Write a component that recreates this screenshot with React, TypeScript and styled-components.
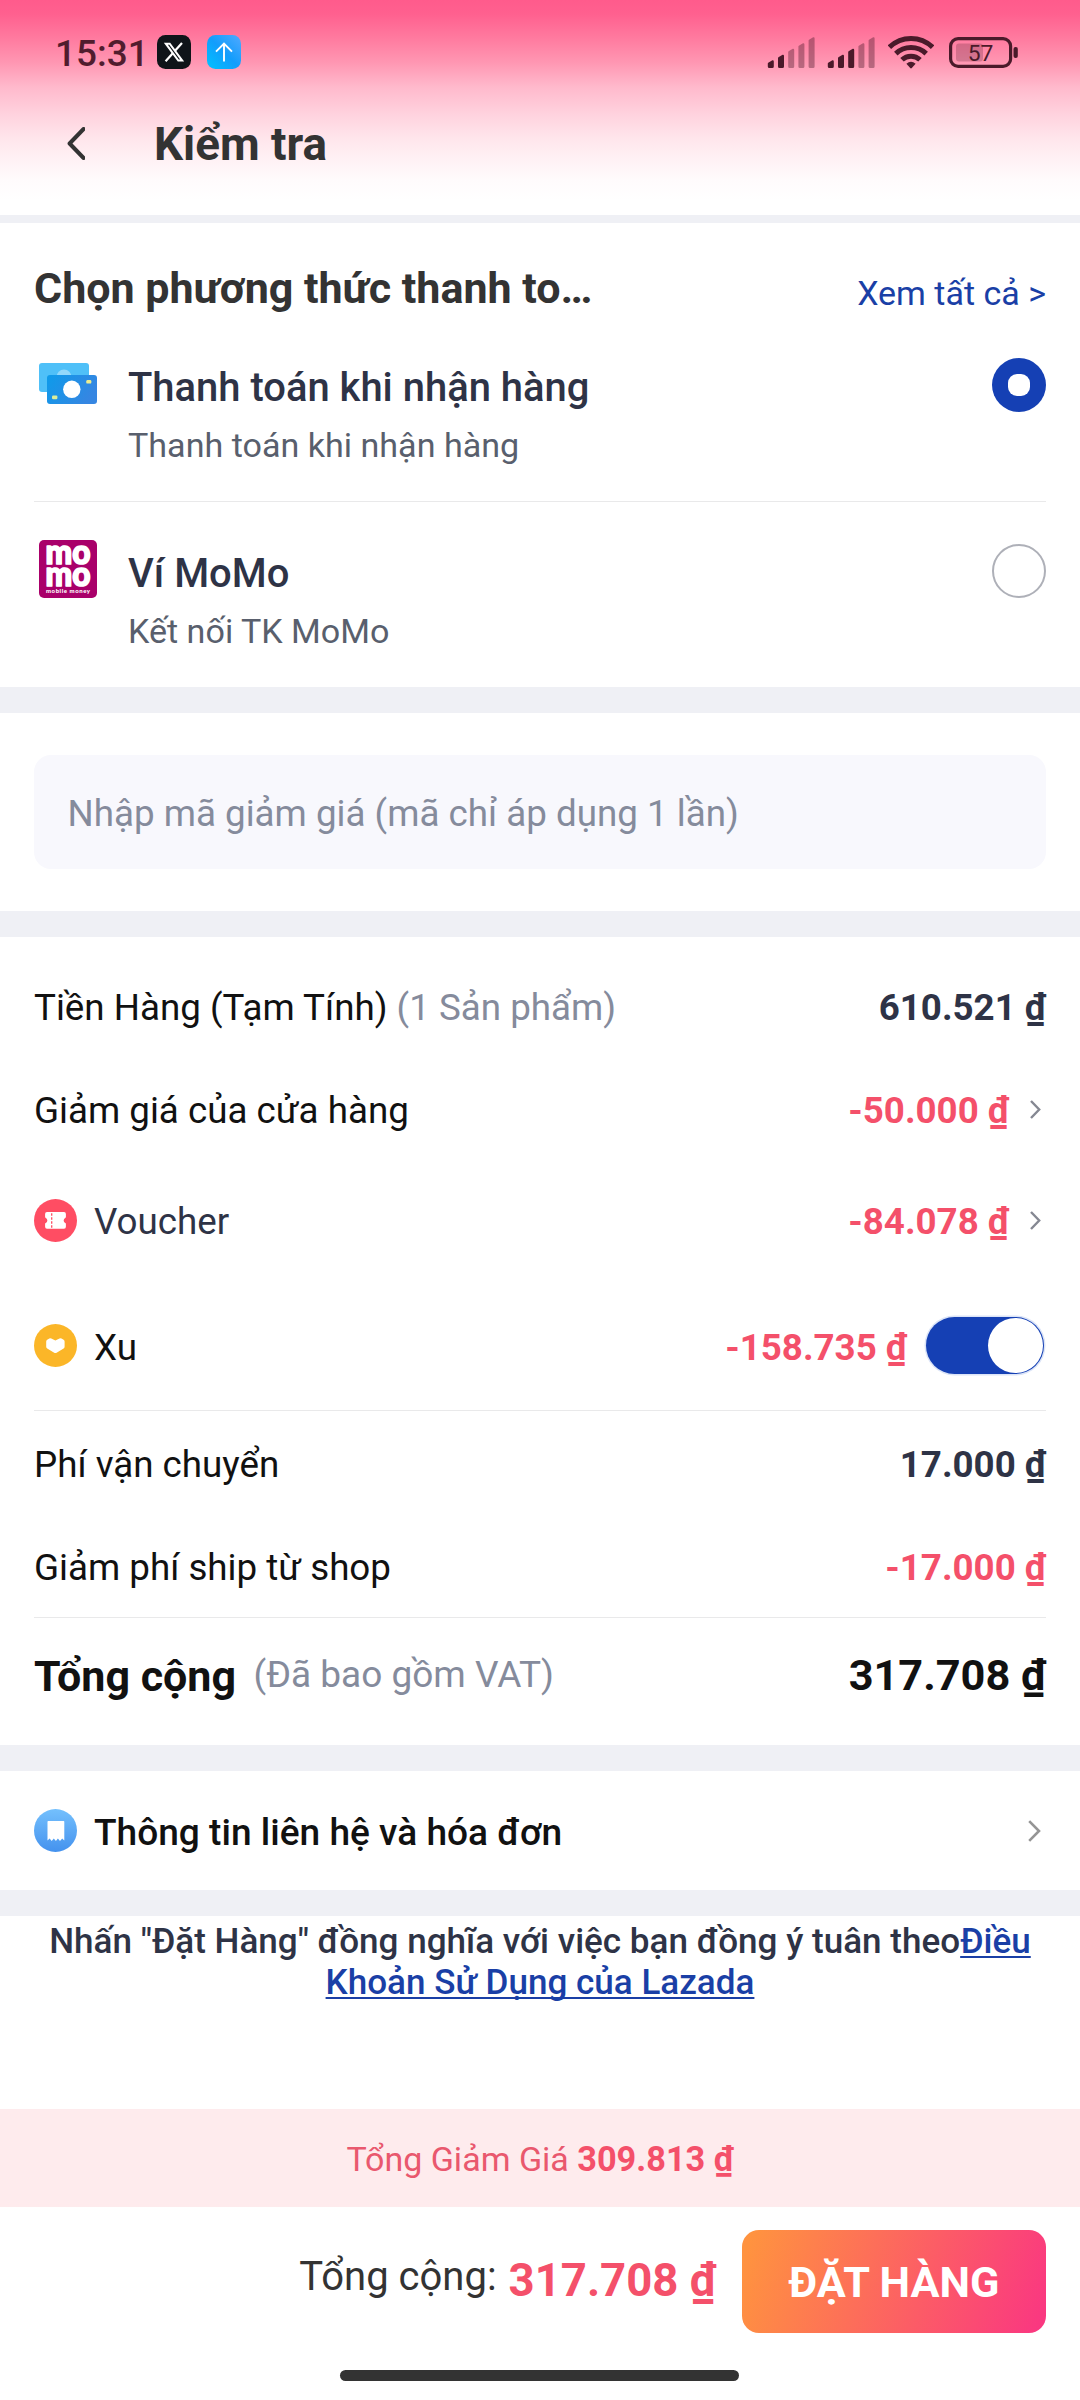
import React, { useState } from "react";
import styled, { createGlobalStyle } from "styled-components";

const color = {
  ink: "#111111",
  heading: "#333333",
  navy: "#2e3346",
  slate: "#595f6d",
  muted: "#858b9c",
  blue: "#1a3fa6",
  primary: "#1540b4",
  red: "#f4506a",
  band: "#eff0f5",
  line: "#e9e9ea",
  status: "#4a1a2a",
};

const GlobalStyle = createGlobalStyle`
  *, *::before, *::after { box-sizing: border-box; }
  body {
    margin: 0;
    background: #ffffff;
    font-family: Roboto, "Liberation Sans", sans-serif;
  }
  button { font-family: inherit; }
`;

const Screen = styled.div`
  display: flex;
  flex-direction: column;
  width: 1080px;
  height: 2400px;
  background: #ffffff;
  overflow: hidden;
`;

/* Header */

const Header = styled.header`
  height: 215px;
  flex: none;
  background: linear-gradient(
    180deg,
    #ff5b8c 0,
    #ff608f 14px,
    #ff7a9f 38px,
    #ff96b2 62px,
    #ffb9cc 87px,
    #ffd2de 114px,
    #ffe6ec 139px,
    #fff3f6 163px,
    #fffbfc 180px,
    #ffffff 200px
  );
`;

const StatusBar = styled.div`
  display: flex;
  align-items: center;
  height: 104px;
  padding: 0 62px 0 55px;
`;

const Clock = styled.span`
  width: 95px;
  margin-right: 7px;
  padding-top: 3px;
  font-size: 36.9px;
  font-weight: 500;
  line-height: 44px;
  color: #511c2e;
`;

const AppBadge = styled.svg`
  display: block;
  width: 34px;
  height: 34px;
  margin-right: 16px;
`;

const StatusIcons = styled.div`
  display: flex;
  align-items: center;
  margin-left: auto;
`;

const SignalSvg = styled.svg`
  display: block;
  margin-right: 12px;
`;

const WifiSvg = styled.svg`
  display: block;
  margin: 0 15px 0 1px;
`;

const BatterySvg = styled.svg`
  display: block;
`;

const TitleBar = styled.div`
  display: flex;
  align-items: center;
  height: 80px;
  padding-left: 67px;
`;

const BackButton = styled.button`
  width: 18px;
  height: 33px;
  margin: 0 69px 2px 0;
  padding: 0;
  border: 0;
  background: none;
  svg { display: block; }
`;

const PageTitle = styled.h1`
  margin: 2px 0 0;
  font-size: 45.8px;
  line-height: 80px;
  font-weight: 700;
  color: ${color.heading};
`;

/* Shared */

const Band = styled.div<{ $thin?: boolean }>`
  flex: none;
  height: ${(p) => (p.$thin ? 8 : 26)}px;
  background: ${color.band};
`;

const Rule = styled.hr`
  height: 1px;
  margin: 0;
  border: 0;
  background: ${color.line};
`;

/* Payment methods */

const Payment = styled.section`
  height: 464px;
  padding: 0 34px;
  flex: none;
`;

const SectionHead = styled.div`
  display: flex;
  justify-content: space-between;
  align-items: center;
  height: 130px;
`;

const SectionTitle = styled.h2`
  margin: 0;
  font-size: 43px;
  font-weight: 700;
  color: ${color.heading};
`;

const SeeAll = styled.a`
  padding-top: 10px;
  font-size: 34px;
  color: ${color.blue};
`;

const Method = styled.div<{ $first?: boolean }>`
  display: flex;
  align-items: flex-start;
  height: ${(p) => (p.$first ? 148 : 185)}px;
  padding: ${(p) => (p.$first ? 1 : 38)}px 0 0 5px;
`;

const MethodIcon = styled.svg`
  display: block;
  width: 58px;
  height: 58px;
  flex: none;
  overflow: visible;
`;

const MethodText = styled.div`
  flex: 1;
  margin-left: 31px;
  padding-top: 5px;
`;

const MethodTitle = styled.div`
  font-size: 39.95px;
  line-height: 58px;
  font-weight: 500;
  color: ${color.navy};
`;

const MethodNote = styled.div`
  font-size: 34.1px;
  line-height: 56px;
  color: ${color.slate};
`;

const Radio = styled.button<{ $on: boolean }>`
  display: grid;
  place-items: center;
  width: 54px;
  height: 54px;
  margin-top: 4px;
  padding: 0;
  border-radius: 50%;
  border: ${(p) => (p.$on ? "0" : "2px solid #aeb0b8")};
  background: ${(p) => (p.$on ? color.primary : "#ffffff")};
  &::after {
    content: "";
    width: 22px;
    height: 22px;
    border-radius: 9px;
    background: #ffffff;
  }
`;

/* Coupon */

const Coupon = styled.section`
  flex: none;
  height: 198px;
  padding: 42px 34px;
`;

const CouponInput = styled.input`
  display: block;
  width: 100%;
  height: 114px;
  padding: 3px 34px 0 33.5px;
  border: 0;
  border-radius: 17px;
  background: #f8f8fd;
  font: 400 36.75px Roboto, "Liberation Sans", sans-serif;
  color: ${color.navy};
  outline: none;
  &::placeholder {
    color: ${color.muted};
    opacity: 1;
  }
`;

/* Summary */

const Summary = styled.section`
  flex: none;
  height: 808px;
  padding: 18px 34px 0;
`;

const Row = styled.div<{ $h: number }>`
  display: flex;
  align-items: center;
  height: ${(p) => p.$h}px;
`;

const CoinRow = styled(Row)`
  padding-top: 2px;
`;

const RoundIcon = styled.svg`
  display: block;
  width: 43px;
  height: 43px;
  margin-right: 17px;
  flex: none;
`;

const Label = styled.span<{ $tone?: string; $weight?: number }>`
  padding-top: 3px;
  font-size: ${(p) => (p.$weight ? 37.1 : 36.75)}px;
  font-weight: ${(p) => p.$weight ?? 400};
  line-height: 44px;
  white-space: pre;
  color: ${(p) => p.$tone ?? color.ink};
`;

const Muted = styled.span`
  color: ${color.muted};
`;

const Price = styled.span<{ $tone?: string }>`
  margin-left: auto;
  padding-top: 3px;
  font-size: 36.7px;
  font-weight: 700;
  line-height: 44px;
  color: ${(p) => p.$tone ?? color.navy};
`;

const IconLabel = styled(Label)`
  padding-top: 4px;
`;

const IconPrice = styled(Price)`
  padding-top: 4px;
`;

const TotalLabel = styled.span`
  margin-right: 17.5px;
  padding-top: 2px;
  font-size: 43px;
  font-weight: 700;
  color: ${color.ink};
`;

const VatNote = styled.span`
  font-size: 37px;
  color: ${color.muted};
`;

const TotalPrice = styled.span`
  margin-left: auto;
  padding-top: 2px;
  font-size: 43.3px;
  font-weight: 700;
  color: ${color.ink};
`;

const ChevronSvg = styled.svg`
  display: block;
  margin: 0 5px 0 21px;
  flex: none;
`;

const EndChevronSvg = styled(ChevronSvg)`
  margin-left: auto;
`;

const Toggle = styled.button<{ $on: boolean }>`
  display: flex;
  align-items: center;
  justify-content: ${(p) => (p.$on ? "flex-end" : "flex-start")};
  width: 118px;
  height: 57px;
  margin: 0 2px 0 19px;
  padding: 0 1px;
  border: 0;
  border-radius: 29px;
  background: ${(p) => (p.$on ? color.primary : "#c9ccd6")};
  box-shadow: 0 0 0 1.5px #dbe4f7;
  &::after {
    content: "";
    width: 55px;
    height: 55px;
    border-radius: 50%;
    background: #ffffff;
  }
`;

/* Contact and terms */

const Contact = styled.section`
  flex: none;
  padding: 0 34px;
`;

const Terms = styled.p`
  flex: 1;
  margin: 0;
  padding-top: 5px;
  font-size: 35.05px;
  font-weight: 500;
  line-height: 41px;
  text-align: center;
  color: ${color.navy};
`;

const TermsLink = styled.a`
  color: ${color.blue};
  text-decoration: underline;
  text-decoration-thickness: 2px;
  text-decoration-skip-ink: none;
  text-underline-offset: 3px;
`;

/* Footer */

const Savings = styled.div`
  flex: none;
  height: 98px;
  padding-top: 1px;
  font-size: 34px;
  line-height: 98px;
  text-align: center;
  background: #feebed;
  color: #e9586e;
`;

const SavingsValue = styled.strong`
  font-size: 34.3px;
  font-weight: 700;
  color: ${color.red};
`;

const Checkout = styled.footer`
  display: flex;
  flex-direction: column;
  align-items: center;
  flex: none;
  height: 193px;
  padding-top: 23px;
`;

const CheckoutBar = styled.div`
  display: flex;
  align-items: center;
  align-self: stretch;
  justify-content: flex-end;
  height: 103px;
  padding-right: 34px;
`;

const PayLabel = styled.span`
  margin-right: 12px;
  padding-bottom: 11px;
  font-size: 40px;
  color: ${color.heading};
`;

const PayTotal = styled.span`
  margin-right: 26px;
  padding-bottom: 2px;
  font-size: 45.5px;
  font-weight: 700;
  color: ${color.red};
`;

const OrderButton = styled.button`
  width: 304px;
  height: 103px;
  padding: 2px 0 0;
  border: 0;
  border-radius: 17px;
  background: linear-gradient(108deg, #ff933f 3%, #fa3880 97%);
  font-size: 43.2px;
  font-weight: 700;
  color: #ffffff;
`;

const HomeIndicator = styled.div`
  width: 399px;
  height: 11px;
  margin: 37px 1px 0 0;
  border-radius: 6px;
  background: #333333;
`;

/* Drawings */

function Signal({ level }: { level: number }) {
  const heights = [8, 13.5, 19.5, 25, 31];
  return (
    <SignalSvg width="48" height="31" viewBox="0 0 48 31">
      {heights.map((h, i) => {
        const x = 0.8 + i * 10.2;
        const top = 31 - h;
        return (
          <path
            key={h}
            d={`M${x} ${top + 3.6}Q${x} ${top + 2.8} ${x + 0.8} ${top + 2.4}L${x + 4.6} ${top + 0.3}Q${x + 6} ${top} ${x + 6} ${top + 1.5}V29.5Q${x + 6} 31 ${x + 4.5} 31H${x + 1.5}Q${x} 31 ${x} 29.5Z`}
            fill={color.status}
            opacity={i < level ? 1 : 0.4}
          />
        );
      })}
    </SignalSvg>
  );
}

function Wifi() {
  return (
    <WifiSvg width="46" height="34" viewBox="0 0 46 34" fill="none" stroke={color.status} strokeWidth="5">
      <path d="M1.4 12.2A31 31 0 0 1 44.6 12.2" />
      <path d="M7.8 18.6A22 22 0 0 1 38.2 18.6" />
      <path d="M14 24.8A13 13 0 0 1 32 24.8" />
      <path d="M18.4 28.8Q23 24.6 27.6 28.8L23.8 33Q23 33.8 22.2 33Z" fill={color.status} stroke="none" />
    </WifiSvg>
  );
}

function Battery() {
  return (
    <BatterySvg width="69" height="31" viewBox="0 0 69 31">
      <rect x="1.6" y="1.6" width="60" height="27.8" rx="7.5" fill="none" stroke={color.status} strokeWidth="3.2" />
      <rect x="7" y="6.5" width="27" height="18" rx="3" fill={color.status} opacity="0.24" />
      <rect x="64.5" y="10" width="4.3" height="11" rx="2" fill={color.status} />
      <text x="31.6" y="23.8" textAnchor="middle" fontFamily="Roboto, sans-serif" fontSize="22.8" fontWeight="400" fill={color.status}>
        57
      </text>
    </BatterySvg>
  );
}

function XBadge() {
  return (
    <AppBadge viewBox="0 0 34 34">
      <rect width="34" height="34" rx="8.5" fill="#0f1419" />
      <path d="M25 8L8.6 26.2" stroke="#ffffff" strokeWidth="2.2" />
      <path d="M8.8 8.7H12.7L25.2 25.6H21.3Z" fill="#0f1419" stroke="#ffffff" strokeWidth="2" />
    </AppBadge>
  );
}

function UploadBadge() {
  return (
    <AppBadge viewBox="0 0 34 34">
      <defs>
        <linearGradient id="upload" x1="0" y1="1" x2="1" y2="0">
          <stop offset="0" stopColor="#00c3ff" />
          <stop offset="0.5" stopColor="#129dfc" />
          <stop offset="1" stopColor="#52a9ff" />
        </linearGradient>
      </defs>
      <rect width="34" height="34" rx="8.5" fill="url(#upload)" />
      <path d="M17 26.5V8.6M9 16.6L17 8.6L25 16.6" fill="none" stroke="#ffffff" strokeWidth="1.9" />
    </AppBadge>
  );
}

function CashIcon() {
  return (
    <MethodIcon viewBox="0 0 58 58">
      <defs>
        <linearGradient id="cash" x1="0" y1="0" x2="1" y2="0.4">
          <stop offset="0" stopColor="#0d9bea" />
          <stop offset="1" stopColor="#3586e2" />
        </linearGradient>
      </defs>
      <rect x="0" y="9" width="50" height="29" rx="3" fill="#4fc0f8" />
      <circle cx="25" cy="23" r="7.5" fill="#93d8fb" />
      <rect x="8" y="21" width="50" height="29" rx="3" fill="url(#cash)" />
      <circle cx="32.8" cy="35.3" r="8.7" fill="#ffffff" />
      <rect x="47.3" y="26" width="5" height="3.6" rx="1.2" fill="#eeee8f" />
      <rect x="13" y="41.6" width="5.4" height="3.6" rx="1.2" fill="#dbee9a" />
    </MethodIcon>
  );
}

function MomoIcon() {
  return (
    <MethodIcon viewBox="0 0 58 58" fontFamily="Lato, Roboto, sans-serif" fontWeight="900" fill="#ffffff">
      <rect width="58" height="58" rx="5" fill="#a9006a" />
      <g stroke="#ffffff" strokeWidth="1.7" strokeLinejoin="round" fontSize="33.5">
        <text x="6.6" y="23.9" textLength="45" lengthAdjust="spacingAndGlyphs">mo</text>
        <text x="6.6" y="45.6" textLength="45" lengthAdjust="spacingAndGlyphs">mo</text>
      </g>
      <text x="7" y="52.8" fontSize="6" textLength="44">mobile money</text>
    </MethodIcon>
  );
}

function VoucherIcon() {
  return (
    <RoundIcon viewBox="0 0 43 43">
      <circle cx="21.5" cy="21.5" r="21.5" fill="#ff4d63" />
      <path
        d="M13 13H30Q31.9 13 31.9 15V18A1 1 0 0 1 31.2 18.9A2.8 2.8 0 0 0 31.2 23.9A1 1 0 0 1 31.9 24.8V27.8Q31.9 29.8 30 29.8H13Q11.1 29.8 11.1 27.8V24.8A1 1 0 0 1 11.8 23.9A2.8 2.8 0 0 0 11.8 18.9A1 1 0 0 1 11.1 18V15Q11.1 13 13 13Z"
        fill="#ffffff"
      />
      <path d="M17.7 14.3V29" stroke="#ff4d63" strokeWidth="1.3" strokeDasharray="2.4 1.6" />
    </RoundIcon>
  );
}

function CoinIcon() {
  return (
    <RoundIcon viewBox="0 0 43 43">
      <circle cx="21.5" cy="21.5" r="21.5" fill="#fbb628" />
      <path
        d="M21.4 16.4L25.5 14.6Q26.5 14.1 27.5 14.6L29.6 15.8Q30.6 16.4 30.6 17.6V22.8Q30.6 24 29.6 24.6L22.6 28.7Q21.4 29.4 20.2 28.7L13.2 24.6Q12.2 24 12.2 22.8V17.6Q12.2 16.4 13.2 15.8L15.3 14.6Q16.3 14.1 17.3 14.6Z"
        fill="#ffffff"
      />
    </RoundIcon>
  );
}

function InvoiceIcon() {
  return (
    <RoundIcon viewBox="0 0 43 43">
      <defs>
        <linearGradient id="invoice" x1="0" y1="0" x2="0" y2="1">
          <stop offset="0" stopColor="#74c0fd" />
          <stop offset="1" stopColor="#4492ee" />
        </linearGradient>
      </defs>
      <circle cx="21.5" cy="21.5" r="21.5" fill="url(#invoice)" />
      <path
        d="M14.2 12H29.6Q30.3 12 30.3 12.7V31.5L28.2 29.4L26 32L23.9 29.4L21.9 32L19.8 29.4L17.7 32L15.6 29.4L13.5 31.5V12.7Q13.5 12 14.2 12Z"
        fill="#ffffff"
      />
    </RoundIcon>
  );
}

function Chevron() {
  return (
    <ChevronSvg width="11" height="19" viewBox="0 0 11 19">
      <path d="M1 1L9.2 9.5L1 18" fill="none" stroke="#858892" strokeWidth="2.4" />
    </ChevronSvg>
  );
}

function EndChevron() {
  return (
    <EndChevronSvg width="13" height="22" viewBox="0 0 13 22">
      <path d="M1.2 1.2L11 11L1.2 20.8" fill="none" stroke="#959595" strokeWidth="2.6" />
    </EndChevronSvg>
  );
}

const methods = [
  { id: "cod", title: "Thanh toán khi nhận hàng", note: "Thanh toán khi nhận hàng", Icon: CashIcon },
  { id: "momo", title: "Ví MoMo", note: "Kết nối TK MoMo", Icon: MomoIcon },
];

export default function App() {
  const [method, setMethod] = useState("cod");
  const [useCoins, setUseCoins] = useState(true);

  return (
    <Screen>
      <GlobalStyle />
      <Header>
        <StatusBar>
          <Clock>15:31</Clock>
          <XBadge />
          <UploadBadge />
          <StatusIcons>
            <Signal level={2} />
            <Signal level={3} />
            <Wifi />
            <Battery />
          </StatusIcons>
        </StatusBar>
        <TitleBar>
          <BackButton aria-label="Quay lại">
            <svg width="18" height="33" viewBox="0 0 18 33">
              <path d="M16.6 2L2.6 16.5L16.6 31" fill="none" stroke="#333333" strokeWidth="4" strokeLinecap="round" strokeLinejoin="round" />
            </svg>
          </BackButton>
          <PageTitle>Kiểm tra</PageTitle>
        </TitleBar>
      </Header>
      <Band $thin />

      <Payment>
        <SectionHead>
          <SectionTitle>Chọn phương thức thanh to…</SectionTitle>
          <SeeAll>Xem tất cả &gt;</SeeAll>
        </SectionHead>
        {methods.map(({ id, title, note, Icon }, i) => (
          <React.Fragment key={id}>
            {i > 0 && <Rule />}
            <Method $first={i === 0}>
              <Icon />
              <MethodText>
                <MethodTitle>{title}</MethodTitle>
                <MethodNote>{note}</MethodNote>
              </MethodText>
              <Radio $on={method === id} onClick={() => setMethod(id)} aria-label={title} />
            </Method>
          </React.Fragment>
        ))}
      </Payment>
      <Band />

      <Coupon>
        <CouponInput placeholder="Nhập mã giảm giá (mã chỉ áp dụng 1 lần)" />
      </Coupon>
      <Band />

      <Summary>
        <Row $h={103}>
          <Label>
            Tiền Hàng (Tạm Tính) <Muted>(1 Sản phẩm)</Muted>
          </Label>
          <Price>610.521 ₫</Price>
        </Row>
        <Row $h={103}>
          <Label>Giảm giá của cửa hàng</Label>
          <Price $tone={color.red}>-50.000 ₫</Price>
          <Chevron />
        </Row>
        <Row $h={118}>
          <VoucherIcon />
          <IconLabel $tone={color.navy}>Voucher</IconLabel>
          <IconPrice $tone={color.red}>-84.078 ₫</IconPrice>
          <Chevron />
        </Row>
        <CoinRow $h={131}>
          <CoinIcon />
          <IconLabel>Xu</IconLabel>
          <IconPrice $tone={color.red}>-158.735 ₫</IconPrice>
          <Toggle $on={useCoins} onClick={() => setUseCoins(!useCoins)} aria-label="Xu" />
        </CoinRow>
        <Rule />
        <Row $h={105}>
          <Label>Phí vận chuyển</Label>
          <Price>17.000 ₫</Price>
        </Row>
        <Row $h={101}>
          <Label>Giảm phí ship từ shop</Label>
          <Price $tone={color.red}>-17.000 ₫</Price>
        </Row>
        <Rule />
        <Row $h={113}>
          <TotalLabel>Tổng cộng</TotalLabel>
          <VatNote>(Đã bao gồm VAT)</VatNote>
          <TotalPrice>317.708 ₫</TotalPrice>
        </Row>
      </Summary>
      <Band />

      <Contact>
        <Row $h={119}>
          <InvoiceIcon />
          <IconLabel $weight={500}>Thông tin liên hệ và hóa đơn</IconLabel>
          <EndChevron />
        </Row>
      </Contact>
      <Band />

      <Terms>
        Nhấn "Đặt Hàng" đồng nghĩa với việc bạn đồng ý tuân theo
        <TermsLink>
          Điều
          <br />
          Khoản Sử Dụng của Lazada
        </TermsLink>
      </Terms>

      <Savings>
        Tổng Giảm Giá <SavingsValue>309.813 ₫</SavingsValue>
      </Savings>
      <Checkout>
        <CheckoutBar>
          <PayLabel>Tổng cộng:</PayLabel>
          <PayTotal>317.708 ₫</PayTotal>
          <OrderButton>ĐẶT HÀNG</OrderButton>
        </CheckoutBar>
        <HomeIndicator />
      </Checkout>
    </Screen>
  );
}
